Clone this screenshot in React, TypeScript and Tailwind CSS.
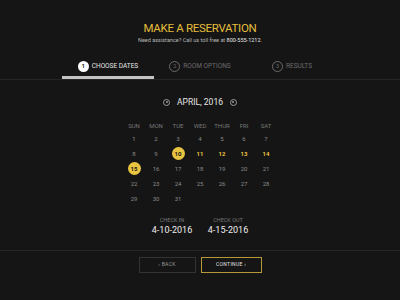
import React from 'react';

const weeks: (number | null)[][] = [
  [1, 2, 3, 4, 5, 6, 7],
  [8, 9, 10, 11, 12, 13, 14],
  [15, 16, 17, 18, 19, 20, 21],
  [22, 23, 24, 25, 26, 27, 28],
  [29, 30, 31, null, null, null, null],
];

const dayNames = ['SUN', 'MON', 'TUE', 'WED', 'THUR', 'FRI', 'SAT'];

const tabs = [
  { n: 1, label: 'CHOOSE DATES', active: true },
  { n: 2, label: 'ROOM OPTIONS', active: false },
  { n: 3, label: 'RESULTS', active: false },
];

const Arrow = () => (
  <span className="w-[7px] h-[7px] rounded-full border border-[#999] flex items-center justify-center">
    <span className="w-[2px] h-[2px] rounded-full bg-[#999]" />
  </span>
);

const Day = ({ d }: { d: number | null }) => {
  if (d === null) return <div className="h-[15px]" />;
  if (d === 10 || d === 15) {
    return (
      <div className="h-[15px] flex items-center justify-center">
        <span className="w-[13px] h-[13px] rounded-full bg-[#e9c441] text-[#1a1a1a] font-bold flex items-center justify-center text-[6px]">
          {d}
        </span>
      </div>
    );
  }
  const hl = d > 10 && d < 15;
  return (
    <div
      className={`h-[15px] flex items-center justify-center ${
        hl ? 'text-[#e9c441] font-bold' : 'text-[#8a8a8a]'
      }`}
    >
      {d}
    </div>
  );
};

const App = () => {
  return (
    <div
      className="w-[400px] h-[300px] bg-[#151515] text-white overflow-hidden flex flex-col"
      style={{ fontFamily: 'Roboto, "DejaVu Sans", sans-serif' }}
    >
      <header className="pt-[20px] flex flex-col items-center">
        <h1 className="text-[11.5px] leading-[16px] text-[#e5bd3c] tracking-[-0.3px]">
          MAKE A RESERVATION
        </h1>
        <p className="text-[5.5px] leading-[7px] mt-[1px] text-[#b5b5b5]">
          Need assistance? Call us toll free at{' '}
          <span className="text-[#e8e8e8]">800-555-1212</span>.
        </p>
      </header>

      <nav className="mt-[17px] border-b border-[#262626] flex justify-center">
        {tabs.map((t) => (
          <div
            key={t.n}
            className={`w-[92px] h-[18px] flex items-start justify-center gap-[3px] ${
              t.active ? 'border-b-[3px] border-[#c4c4c4]' : ''
            }`}
          >
            <span
              className={`w-[11px] h-[11px] rounded-full flex items-center justify-center text-[5.5px] ${
                t.active
                  ? 'bg-white text-[#151515] font-bold'
                  : 'border border-[#6b6b6b] text-[#6b6b6b]'
              }`}
            >
              {t.n}
            </span>
            <span
              className={`text-[6.5px] leading-[11px] ${
                t.active ? 'text-[#e8e8e8]' : 'text-[#6b6b6b]'
              }`}
            >
              {t.label}
            </span>
          </div>
        ))}
      </nav>

      <section className="flex flex-col items-center">
        <div className="mt-[16px] flex items-center gap-[7px]">
          <Arrow />
          <span className="text-[8.5px] leading-[12px] text-[#e6e6e6]">APRIL, 2016</span>
          <Arrow />
        </div>

        <div className="mt-[11px] w-[154px] grid grid-cols-7 text-[6px] text-[#777]">
          {dayNames.map((n) => (
            <div key={n} className="h-[12px] flex items-center justify-center">
              {n}
            </div>
          ))}
        </div>
        <div className="w-[154px] grid grid-cols-7 text-[6px]">
          {weeks.flat().map((d, i) => (
            <Day key={i} d={d} />
          ))}
        </div>

        <div className="mt-[10px] flex gap-[16px]">
          {[
            ['CHECK IN', '4-10-2016'],
            ['CHECK OUT', '4-15-2016'],
          ].map(([l, v]) => (
            <div key={l} className="flex flex-col items-center w-[40px] whitespace-nowrap">
              <span className="text-[5.5px] leading-[8px] text-[#777]">{l}</span>
              <span className="text-[9px] leading-[12px] text-[#eeeeee]">{v}</span>
            </div>
          ))}
        </div>
      </section>

      <footer className="mt-[14px] border-t border-[#262626] flex justify-center gap-[5px] pt-[6px]">
        <button className="w-[57px] h-[16px] border border-[#333] text-[5px] text-[#9a9a9a] tracking-[0.3px]">
          ‹ BACK
        </button>
        <button className="w-[61px] h-[16px] border border-[#b8993a] text-[5px] text-[#e0e0e0] tracking-[0.3px]">
          CONTINUE ›
        </button>
      </footer>
    </div>
  );
};

export default App;
